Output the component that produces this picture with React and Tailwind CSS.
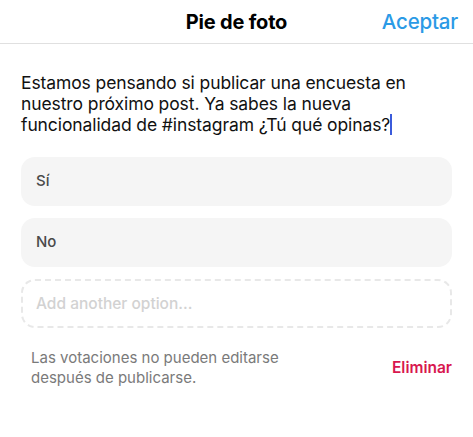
import React from "react";

const options = ["Sí", "No"];

export default function App() {
    return (
        <div className="w-[473px] h-[437px] bg-white overflow-hidden font-['Inter',sans-serif]">
            {/* Header */}
            <div className="relative h-[44px] flex items-center justify-center border-b border-[#e0e0e0]">
                <h1 className="text-[20px] font-bold text-black tracking-[-0.2px]">Pie de foto</h1>
                <button className="absolute right-[15px] top-[7px] text-[20.5px] font-medium text-[#2b9ae6] tracking-[-0.2px]">
                    Aceptar
                </button>
            </div>

            {/* Caption */}
            <div className="px-[21px] pt-[28px]">
                <p className="text-[17.5px] leading-[21px] text-[#111] tracking-[-0.1px]">
                    Estamos pensando si publicar una encuesta en nuestro próximo post. Ya sabes la nueva funcionalidad de #instagram ¿Tú qué opinas?
                    <span className="inline-block w-[2px] h-[21px] bg-[#3b5bdb] align-[-4px]" />
                </p>
            </div>

            {/* Options */}
            <div className="px-[21px] pt-[22px] flex flex-col gap-[12px]">
                {options.map((opt) => (
                    <div key={opt} className="h-[49px] rounded-[14px] bg-[#f5f5f5] flex items-center px-[15px]">
                        <span className="text-[15px] font-medium text-[#4a4a4a]">{opt}</span>
                    </div>
                ))}
                <div className="h-[49px] rounded-[14px] border-2 border-dashed border-[#e8e8e8] flex items-center px-[13px]">
                    <span className="text-[15.5px] font-medium text-[#d2d2d2]">Add another option...</span>
                </div>
            </div>

            {/* Footer */}
            <div className="pl-[31px] pr-[21px] pt-[20px] flex items-center justify-between">
                <p className="text-[15px] leading-[20px] text-[#7a7a7a]">
                    Las votaciones no pueden editarse
                    <br />
                    después de publicarse.
                </p>
                <button className="text-[15.5px] font-semibold text-[#d8174f]">Eliminar</button>
            </div>
        </div>
    );
}
